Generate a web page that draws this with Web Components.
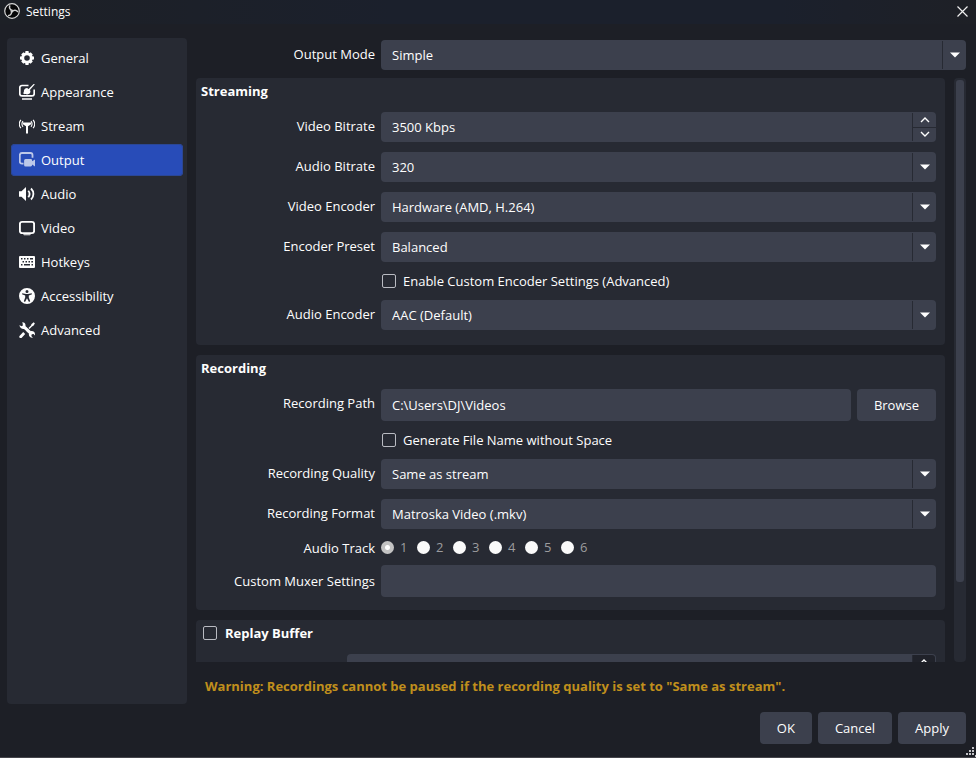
<!DOCTYPE html>
<html lang="en">
<head>
<meta charset="utf-8">
<title>Settings</title>
<style>
  :root {
    --bg: #1d1f26;
    --panel: #272a33;
    --field: #3c404d;
    --accent: #284cb8;
    --warn: #c08f1c;
  }
  * { box-sizing: border-box; }
  body {
    margin: 0;
    background: var(--bg);
    color: #fefefe;
    font: 13px/18px "Open Sans", "Noto Sans", sans-serif;
  }
</style>
</head>
<body>
<settings-window>
  <title-bar slot="title">Settings</title-bar>
  <side-nav slot="nav">
    <nav-item icon="general">General</nav-item>
    <nav-item icon="appearance">Appearance</nav-item>
    <nav-item icon="stream">Stream</nav-item>
    <nav-item icon="output" selected>Output</nav-item>
    <nav-item icon="audio">Audio</nav-item>
    <nav-item icon="video">Video</nav-item>
    <nav-item icon="hotkeys">Hotkeys</nav-item>
    <nav-item icon="accessibility">Accessibility</nav-item>
    <nav-item icon="advanced">Advanced</nav-item>
  </side-nav>
  <combo-field slot="mode" label="Output Mode" value="Simple"></combo-field>
  <settings-group heading="Streaming" style="--group-end: 15px">
    <spin-field label="Video Bitrate" value="3500 Kbps"></spin-field>
    <combo-field label="Audio Bitrate" value="320"></combo-field>
    <combo-field label="Video Encoder" value="Hardware (AMD, H.264)"></combo-field>
    <combo-field label="Encoder Preset" value="Balanced"></combo-field>
    <check-field label="Enable Custom Encoder Settings (Advanced)"></check-field>
    <combo-field label="Audio Encoder" value="AAC (Default)"></combo-field>
  </settings-group>
  <settings-group heading="Recording">
    <text-field label="Recording Path" value="C:\Users\DJ\Videos"><push-button>Browse</push-button></text-field>
    <check-field label="Generate File Name without Space"></check-field>
    <combo-field label="Recording Quality" value="Same as stream"></combo-field>
    <combo-field label="Recording Format" value="Matroska Video (.mkv)"></combo-field>
    <track-field label="Audio Track" tracks="6"></track-field>
    <text-field label="Custom Muxer Settings" value="" centered></text-field>
  </settings-group>
  <settings-group heading="Replay Buffer" checkable style="--label-width: 140px">
    <spin-field value="" dim></spin-field>
  </settings-group>
  <span slot="warning">Warning: Recordings cannot be paused if the recording quality is set to "Same as stream".</span>
  <push-button slot="actions">OK</push-button>
  <push-button slot="actions">Cancel</push-button>
  <push-button slot="actions">Apply</push-button>
</settings-window>

<script>
const base = `
  * { box-sizing: border-box; }
  button, input, select { font: inherit; color: inherit; margin: 0; }
`;
const rowCss = `
  :host { display: grid; grid-template-columns: var(--label-width, 174px) minmax(0, 1fr); column-gap: 6px; }
  .label { text-align: right; line-height: 28px; white-space: nowrap; }
  .box { height: 30px; background: var(--field); border: 0; border-radius: 4px; outline: none; }
`;
const checkCss = `
  input[type=checkbox] { appearance: none; width: 14px; height: 14px; flex: none;
    border: 1px solid #b9bbc2; border-radius: 2px; background: transparent; }
  input[type=checkbox]:checked { background: var(--accent); }
`;
function define(name, css, render) {
  customElements.define(name, class extends HTMLElement {
    connectedCallback() {
      if (this.shadowRoot) return;
      const root = this.attachShadow({ mode: "open" });
      root.innerHTML = `<style>${base}${css}</style>${render(this)}`;
    }
  });
}

const icons = {
  general: `<g fill="none" stroke="currentColor"><circle cx="8" cy="8" r="4.300" stroke-width="3"/><path d="M8 1v3M8 12v3M1 8h3M12 8h3M3.300 3.300l2 2M10.700 10.700l2 2M12.700 3.300l-2 2M5.300 10.700l-2 2" stroke-width="3.200"/></g>`,
  appearance: `<path d="M9.500 1.500H3A2.200 2.200 0 0 0 .8 3.700v6A2.200 2.200 0 0 0 3 11.900h10a2.200 2.200 0 0 0 2.200-2.200V5.500" fill="none" stroke="currentColor" stroke-width="1.700"/><path d="M3 14.200h10v1.500H3zM15.900.2 10 7l-1.400-1.100L14.600 0zM8.200 4l3.200 2.800c.3 2.300-1.200 3.600-3.100 3.600-1.700 0-3.400-.2-4.400-1.400 1-.3 1-1 1-2.200.1-1.600 1.600-2.800 3.300-2.800z"/>`,
  stream: `<path d="M3.900 4.500h8.200v1.700L9 8.200v7.400H7V8.200L3.900 6.200z"/><path d="M4 3.200a4.600 4.600 0 0 0 0 5.600M12 3.200a4.600 4.600 0 0 1 0 5.600M1.900 1.800a6.800 6.800 0 0 0 0 8.400M14.100 1.800a6.800 6.800 0 0 1 0 8.400" fill="none" stroke="currentColor" stroke-width="1.100"/>`,
  output: `<path d="M4.500 11.600H3A2.200 2.200 0 0 1 .800 9.400V3.200A2.200 2.200 0 0 1 3 1h8.500a2 2 0 0 1 2 2v2.800" fill="none" stroke="currentColor" stroke-width="1.800"/><path d="M6.600 7h5.100a1.400 1.400 0 0 1 1.400 1.400v.9L16 7.400v7l-2.900-1.900v.6a1.500 1.500 0 0 1-1.400 1.400H6.600a1.500 1.500 0 0 1-1.500-1.500V8.500A1.500 1.500 0 0 1 6.600 7z"/>`,
  audio: `<path d="M0 5.200h2.500L7 1v14l-4.500-4.200H0z"/><path d="M9.300 4.700c1.500 1.900 1.500 4.700 0 6.600M12 2.500c3.200 3.200 3.200 7.800 0 11" fill="none" stroke="currentColor" stroke-width="1.800"/>`,
  video: `<rect x=".9" y="1.900" width="14.200" height="11.200" rx="2.200" fill="none" stroke="currentColor" stroke-width="1.900"/><path d="M4 14.200h8L11 15.200H5z"/>`,
  hotkeys: `<path fill-rule="evenodd" d="M1 2h14a1 1 0 0 1 1 1v10a1 1 0 0 1-1 1H1a1 1 0 0 1-1-1V3a1 1 0 0 1 1-1zm1 2v1.500h1.500V4zm3 0v1.500h1.500V4zm3 0v1.500h1.500V4zm3 0v1.500H14V4zM3.500 7v1.500H5V7zm3 0v1.500H8V7zm3 0v1.500H11V7zm2.800 0v1.500H14V7zM2 10v1.500h1.500V10zm3 0v1.500h6V10zm7.500 0v1.500H14V10z"/>`,
  accessibility: `<path fill-rule="evenodd" d="M8 0a8 8 0 1 1 0 16A8 8 0 0 1 8 0zm0 2a1.500 1.500 0 1 0 0 3 1.500 1.500 0 0 0 0-3zM3.300 5.300 3 6.300l3.200 1.200v2L4.800 13.300l1.200.6L8 10.300l2 3.600 1.200-.6-1.400-3.800v-2L13 6.300l-.3-1L9 5.900H7z"/>`,
  advanced: `<path d="m3.600 1.200.3 2.200-1.600.900L.5 3.100A4 4 0 0 0 5 7l1.700 1.600L8 9.900l1.900 1.700c-.500 2.600 1.600 4.700 4 4.200l-1.600-1.900.5-1.700 1.800-.2 1.300 1.400c.6-2.700-1.400-4.700-4-4.200L6.400 4.100C7 1.900 5.400 0 3.200.2z"/><path d="m14.700.2 1.200 1.200-1.700 2.700-1 .2-2.700 2.800-1-1 2.700-2.800.1-1zM4.200 10l2 2-3.700 3.900a1.450 1.450 0 0 1-2-2z"/>`
};

define("settings-window", `
  :host { display: flex; flex-direction: column; height: 100vh; min-height: 400px; border-bottom: 1px solid #45454b; }
  .main { flex: 1; min-height: 0; display: grid; grid-template-columns: 180px minmax(0, 1fr); column-gap: 9px; padding: 14px 10px 0 7px; }
  .content { display: flex; flex-direction: column; min-height: 0; padding-top: 2px; }
  .mode { padding-left: 5px; }
  .scroller { flex: 1; min-height: 0; margin-top: 8px; display: grid; grid-template-columns: minmax(0, 1fr) 12px; column-gap: 9px; }
  .groups { overflow: hidden; display: flex; flex-direction: column; gap: 10px; }
  .bar { background: var(--panel); border-radius: 4px; padding: 2px; }
  .thumb { height: 86.500%; background: var(--field); border-radius: 3px; }
  .warning { padding: 14px 9px 8px; line-height: 20px; font-weight: 700; color: var(--warn); }
  footer { position: relative; display: flex; justify-content: flex-end; gap: 6px; padding: 8px 10px 13px; }
  .grip { position: absolute; right: 0; bottom: 0; width: 10px; height: 10px; fill: #c4c4c8; }
`, () => `
  <slot name="title"></slot>
  <div class="main">
    <slot name="nav"></slot>
    <div class="content">
      <div class="mode"><slot name="mode"></slot></div>
      <div class="scroller">
        <div class="groups"><slot></slot></div>
        <div class="bar"><div class="thumb"></div></div>
      </div>
      <div class="warning"><slot name="warning"></slot></div>
    </div>
  </div>
  <footer><slot name="actions"></slot>
    <svg class="grip" viewBox="0 0 10 10"><path d="M6 0h2v2H6zM3 3h2v2H3zM6 3h2v2H6zM0 6h2v2H0zM3 6h2v2H3zM6 6h2v2H6zM9 8h1v2H9z"/></svg>
  </footer>`);

define("title-bar", `
  :host { display: flex; align-items: center; gap: 6px; height: 24px; padding: 0 8px 0 4px; font-size: 12px;
    background: linear-gradient(90deg, #1d2026, #1b202c 40%, #1b202c 80%, #1e2026); }
  .logo { width: 16px; height: 16px; margin-bottom: 2px; }
  .name { flex: 1; }
  button { border: 0; background: none; padding: 0; width: 11px; height: 22px; align-self: flex-start; display: flex; align-items: center; }
`, () => `
  <svg class="logo" viewBox="0 0 16 16"><circle cx="8" cy="8" r="7.300" fill="#060607" stroke="#d6d6d6" stroke-width="1.200"/>
    <g fill="none" stroke="#cfcfcf" stroke-width="1.500" stroke-linecap="round"><path d="M8.600 7.400C6.300 7.200 4.900 5.200 5.700 2.900"/><path d="M8.600 7.400C6.300 7.200 4.900 5.200 5.700 2.900" transform="rotate(120 8 8)"/><path d="M8.600 7.400C6.300 7.200 4.900 5.200 5.700 2.900" transform="rotate(240 8 8)"/></g></svg>
  <span class="name"><slot></slot></span>
  <button aria-label="Close"><svg width="11" height="11" viewBox="0 0 11 11"><path d="m.5.5 10 10m0-10-10 10" stroke="#f0f0f0" stroke-width="1.200"/></svg></button>`);

define("side-nav", `
  :host { display: block; background: var(--panel); border-radius: 4px; padding: 4px; }
  nav { display: flex; flex-direction: column; gap: 2px; }
`, () => `<nav aria-label="Sections"><slot></slot></nav>`);

define("nav-item", `
  :host { display: block; }
  a { display: flex; align-items: center; gap: 6px; height: 32px; padding: 0 8px; border-radius: 4px; color: inherit; text-decoration: none; }
  a.on { background: var(--accent); box-shadow: inset 0 0 0 1px #2b4795; }
  svg { width: 16px; height: 16px; fill: currentColor; color: #fefefe; flex: none; }
  .on svg { color: #bdc8e9; }
`, el => `<a href="#" class="${el.hasAttribute("selected") ? "on" : ""}">
  <svg viewBox="0 0 16 16">${icons[el.getAttribute("icon")]}</svg><span><slot></slot></span></a>`);

define("settings-group", checkCss + `
  :host { display: block; flex: none; background: var(--panel); border-radius: 4px; padding: 4px 9px var(--group-end, 13px) 5px; }
  .head { display: flex; align-items: center; gap: 8px; height: 18px; margin-bottom: 12px; font-weight: 700; }
  .check { padding: 0 2px; }
  .rows { display: flex; flex-direction: column; gap: 10px; }
`, el => {
  const h = el.getAttribute("heading");
  return (el.hasAttribute("checkable")
    ? `<label class="head check"><input type="checkbox"><span>${h}</span></label>`
    : `<div class="head">${h}</div>`) + `<div class="rows"><slot></slot></div>`;
});

define("combo-field", rowCss + `
  .wrap { position: relative; }
  select { appearance: none; width: 100%; padding: 0 32px 0 11px; display: block; }
  .arrow { position: absolute; right: 0; top: 1px; bottom: 1px; width: 24px; border-left: 1px solid var(--panel);
    display: flex; align-items: center; justify-content: center; pointer-events: none; }
`, el => `<label class="label" for="c">${el.getAttribute("label")}</label>
  <div class="wrap"><select class="box" id="c"><option>${el.getAttribute("value")}</option></select>
  <span class="arrow"><svg width="10" height="6"><path d="M0 .5h10L5 5.500z" fill="#fefefe"/></svg></span></div>`);

define("spin-field", rowCss + `
  .box { display: flex; }
  input { flex: 1; min-width: 0; border: 0; background: none; padding: 0 11px; outline: none; }
  .steps { width: 24px; display: flex; flex-direction: column; margin: 1px 0; border-left: 1px solid var(--panel); }
  button { flex: 1; border: 0; background: none; padding: 0; display: flex; align-items: center; justify-content: center; }
  button + button { border-top: 1px solid var(--panel); }
  path { fill: none; stroke: #fefefe; stroke-width: 1.400; }
  .dim .steps { background: #20222a; margin-right: 1px; border-radius: 0 3px 3px 0; width: 23px; }
`, el => {
  const label = el.getAttribute("label");
  return `${label ? `<label class="label" for="s">${label}</label>` : "<span></span>"}
  <div class="box ${el.hasAttribute("dim") ? "dim" : ""}"><input id="s" type="text" value="${el.getAttribute("value")}" ${label ? "" : 'aria-label="Length"'}>
  <div class="steps"><button aria-label="Increase"><svg width="10" height="6"><path d="m1 5 4-4 4 4"/></svg></button>
  <button aria-label="Decrease"><svg width="10" height="6"><path d="m1 1 4 4 4-4"/></svg></button></div></div>`;
});

define("text-field", rowCss + `
  .wrap { display: flex; gap: 6px; }
  input.box { flex: 1; min-width: 0; height: 32px; padding: 0 11px; }
  :host([centered]) .label { line-height: 32px; }
`, el => `<label class="label" for="t">${el.getAttribute("label")}</label>
  <div class="wrap"><input class="box" id="t" type="text" value="${el.getAttribute("value")}"><slot></slot></div>`);

define("check-field", rowCss + checkCss + `
  label { grid-column: 2; display: flex; align-items: center; gap: 7px; height: 18px; padding-left: 1px; }
`, el => `<label><input type="checkbox"><span>${el.getAttribute("label")}</span></label>`);

define("track-field", rowCss + `
  .label { line-height: 18px; height: 16px; }
  .tracks { display: flex; height: 16px; align-items: center; }
  .tracks label { display: flex; align-items: center; gap: 6px; width: 36px; line-height: 16px; color: #9c9c9e; }
  input { appearance: none; width: 13px; height: 13px; border-radius: 50%; background: #fafafa; }
  input:checked { background: radial-gradient(circle, #fefefe 0 2px, #c3c3c3 3px); }
`, el => `<span class="label" id="g">${el.getAttribute("label")}</span>
  <div class="tracks" role="radiogroup" aria-labelledby="g">${Array.from({ length: +el.getAttribute("tracks") }, (_, i) =>
    `<label><input type="radio" name="track" ${i ? "" : "checked"}><span>${i + 1}</span></label>`).join("")}</div>`);

define("push-button", `
  :host { display: block; }
  button { height: 32px; border: 0; border-radius: 4px; background: var(--field); padding: 0 17px; }
`, () => `<button><slot></slot></button>`);
</script>
</body>
</html>
